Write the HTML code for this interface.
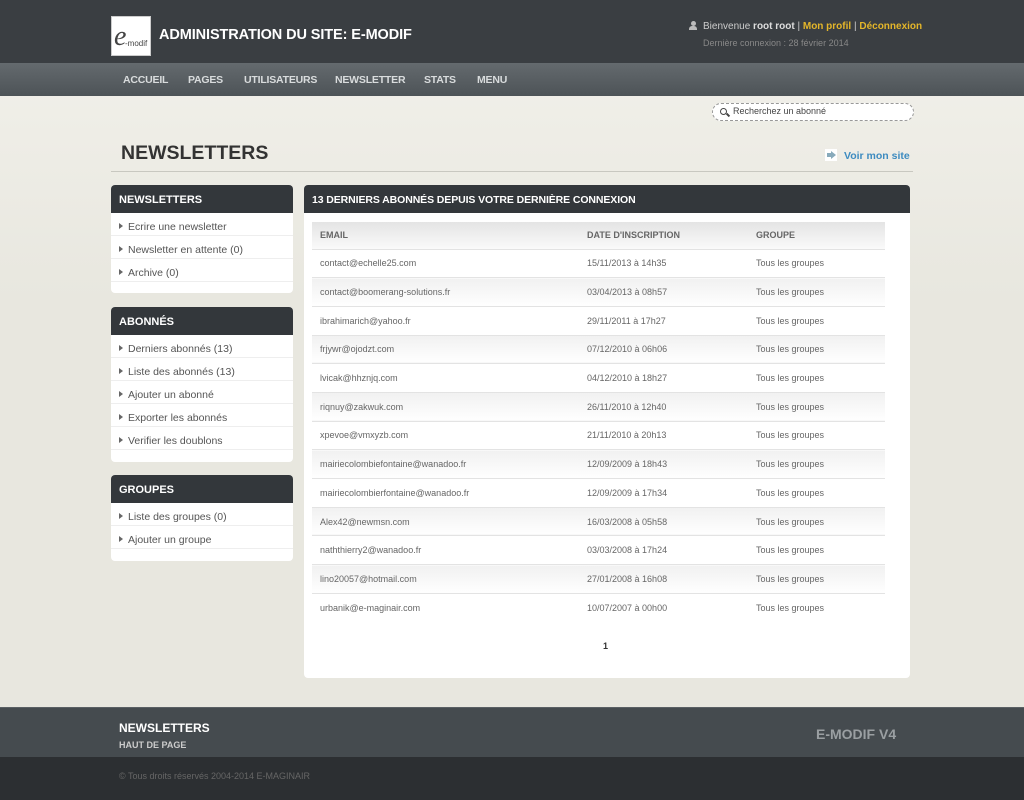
<!DOCTYPE html>
<html><head><meta charset="utf-8"><style>
*{margin:0;padding:0;box-sizing:border-box}
body{width:1024px;height:800px;overflow:hidden;background:linear-gradient(#f3f2ec,#e8e7df 300px);font-family:"Liberation Sans",Arial,sans-serif;position:relative;color:#555}
.a{position:absolute}
#top{left:0;top:0;width:1024px;height:63px;background:#3a3e42}
#nav{left:0;top:63px;width:1024px;height:33px;background:linear-gradient(#646a6e,#4d5357)}
#nav span{position:absolute;top:11px;font-size:10.5px;font-weight:bold;color:#d9dcdd;letter-spacing:-0.2px}
#logo{left:111px;top:16px;width:40px;height:40px;background:#fff;border:1px solid #ccc}
.box{position:absolute;left:111px;width:182px;background:#fff;border-radius:4px;overflow:hidden}
.box h3{height:28px;background:#33373b;color:#fff;font-size:11px;font-weight:bold;padding:9px 8px 0}
.box div{height:23px;border-bottom:1px solid #eee;font-size:10.5px;color:#555;padding:9px 0 0 8px;line-height:10px}
.box div:before{content:"";display:inline-block;border-left:4px solid #666;border-top:3px solid transparent;border-bottom:3px solid transparent;margin-right:5px;vertical-align:1px}
#main{left:304px;top:185px;width:606px;height:493px;background:#fff;border-radius:4px;overflow:hidden}
#main h3{height:28px;background:#33373b;color:#fff;font-size:10.5px;font-weight:bold;padding:9px 8px 0;letter-spacing:-0.1px}
table{position:absolute;left:8px;top:37px;width:573px;border-collapse:collapse;font-size:9px;color:#666}
th{height:27px;text-align:left;font-size:9px;color:#666;background:linear-gradient(#e4e4e4,#fafafa);padding-left:8px}
td{height:28.7px;padding-left:8px;border-top:1px solid #e3e3e3}
tr:nth-child(odd) td{background:linear-gradient(#f1f1f1,#fff)}
#foot{left:0;top:707px;width:1024px;height:50px;background:#454b4f;border-top:1px solid #5a6064}
#foot2{left:0;top:757px;width:1024px;height:43px;background:#2c2f32}
</style></head><body>
<div class="a" id="top"></div>
<div class="a" id="logo"><span class="a" style="left:2px;top:4px;font:italic 28px 'Liberation Serif',serif;color:#444">e</span><span class="a" style="left:13px;top:22px;font-size:8px;color:#444">-modif</span></div>
<div class="a" style="left:159px;top:27px;font-size:14.5px;font-weight:bold;color:#fff;letter-spacing:-0.1px">ADMINISTRATION DU SITE: E-MODIF</div>
<div class="a" style="left:689px;top:21px;width:8px;height:9px"><div style="width:5px;height:5px;border-radius:50%;background:#bbb;margin-left:1.5px"></div><div style="width:8px;height:4px;background:#bbb;border-radius:3px 3px 0 0"></div></div>
<div class="a" style="left:703px;top:21px;font-size:10px;color:#ccc">Bienvenue <b style="color:#ddd">root root</b> | <b style="color:#e4b62a">Mon profil</b> | <b style="color:#e4b62a">Déconnexion</b></div>
<div class="a" style="left:703px;top:38px;font-size:9px;color:#888">Dernière connexion : 28 février 2014</div>
<div class="a" id="nav"><span style="left:123px">ACCUEIL</span><span style="left:188px">PAGES</span><span style="left:244px">UTILISATEURS</span><span style="left:335px">NEWSLETTER</span><span style="left:424px">STATS</span><span style="left:477px">MENU</span></div>
<div class="a" style="left:712px;top:103px;width:202px;height:18px;background:#fff;border:1px dashed #999;border-radius:9px"><span class="a" style="left:7px;top:4px;width:7px;height:7px;border:1.5px solid #444;border-radius:50%"></span><span class="a" style="left:13px;top:10px;width:4px;height:2px;background:#444;transform:rotate(45deg)"></span><span class="a" style="left:20px;top:2px;font-size:9px;color:#444">Recherchez un abonné</span></div>
<div class="a" style="left:121px;top:142px;font-size:19.5px;font-weight:bold;color:#333">NEWSLETTERS</div>
<div class="a" style="left:825px;top:149px;width:12px;height:12px;background:#fff"><span class="a" style="left:2px;top:4px;width:4px;height:4px;background:#8ab"></span><span class="a" style="left:6px;top:2px;border-left:5px solid #8ab;border-top:4px solid transparent;border-bottom:4px solid transparent"></span></div>
<div class="a" style="left:844px;top:150px;font-size:10.5px;font-weight:bold;color:#3d8bc0">Voir mon site</div>
<div class="a" style="left:111px;top:171px;width:802px;height:1px;background:#c8c8c0"></div>
<div class="box" style="top:185px;height:108px"><h3>NEWSLETTERS</h3><div>Ecrire une newsletter</div><div>Newsletter en attente (0)</div><div>Archive (0)</div></div>
<div class="box" style="top:307px;height:155px"><h3>ABONNÉS</h3><div>Derniers abonnés (13)</div><div>Liste des abonnés (13)</div><div>Ajouter un abonné</div><div>Exporter les abonnés</div><div>Verifier les doublons</div></div>
<div class="box" style="top:475px;height:86px"><h3>GROUPES</h3><div>Liste des groupes (0)</div><div>Ajouter un groupe</div></div>
<div class="a" id="main"><h3>13 DERNIERS ABONNÉS DEPUIS VOTRE DERNIÈRE CONNEXION</h3>
<table><tr><th style="width:267px">EMAIL</th><th style="width:169px">DATE D'INSCRIPTION</th><th>GROUPE</th></tr>
<tr><td>contact@echelle25.com</td><td>15/11/2013 à 14h35</td><td>Tous les groupes</td></tr>
<tr><td>contact@boomerang-solutions.fr</td><td>03/04/2013 à 08h57</td><td>Tous les groupes</td></tr>
<tr><td>ibrahimarich@yahoo.fr</td><td>29/11/2011 à 17h27</td><td>Tous les groupes</td></tr>
<tr><td>frjywr@ojodzt.com</td><td>07/12/2010 à 06h06</td><td>Tous les groupes</td></tr>
<tr><td>lvicak@hhznjq.com</td><td>04/12/2010 à 18h27</td><td>Tous les groupes</td></tr>
<tr><td>riqnuy@zakwuk.com</td><td>26/11/2010 à 12h40</td><td>Tous les groupes</td></tr>
<tr><td>xpevoe@vmxyzb.com</td><td>21/11/2010 à 20h13</td><td>Tous les groupes</td></tr>
<tr><td>mairiecolombiefontaine@wanadoo.fr</td><td>12/09/2009 à 18h43</td><td>Tous les groupes</td></tr>
<tr><td>mairiecolombierfontaine@wanadoo.fr</td><td>12/09/2009 à 17h34</td><td>Tous les groupes</td></tr>
<tr><td>Alex42@newmsn.com</td><td>16/03/2008 à 05h58</td><td>Tous les groupes</td></tr>
<tr><td>naththierry2@wanadoo.fr</td><td>03/03/2008 à 17h24</td><td>Tous les groupes</td></tr>
<tr><td>lino20057@hotmail.com</td><td>27/01/2008 à 16h08</td><td>Tous les groupes</td></tr>
<tr><td>urbanik@e-maginair.com</td><td>10/07/2007 à 00h00</td><td>Tous les groupes</td></tr>
</table>
<div class="a" style="left:299px;top:456px;font-size:9px;font-weight:bold;color:#333">1</div>
</div>
<div class="a" id="foot"><span class="a" style="left:119px;top:13px;font-size:12px;font-weight:bold;color:#fff">NEWSLETTERS</span><span class="a" style="left:119px;top:32px;font-size:9px;font-weight:bold;color:#ccc">HAUT DE PAGE</span><span class="a" style="left:816px;top:18px;font-size:14px;font-weight:bold;color:#9a9fa2">E-MODIF V4</span></div>
<div class="a" id="foot2"><span class="a" style="left:119px;top:14px;font-size:9px;color:#666">© Tous droits réservés 2004-2014 E-MAGINAIR</span></div>
</body></html>
